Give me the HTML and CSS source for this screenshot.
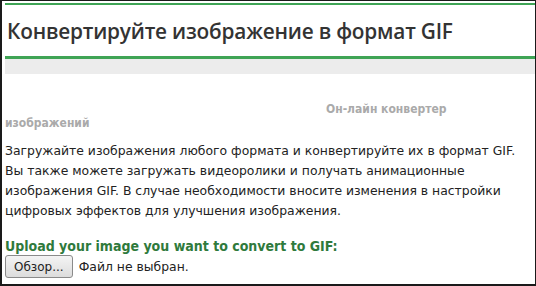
FILE: index.html
```html
<!DOCTYPE html>
<html lang="ru">
<head>
  <meta charset="UTF-8" />
  <title>Конвертируйте изображение в формат GIF</title>
  <link rel="stylesheet" href="styles.css">
</head>
<body>
  <div class="frame">
    <div class="header">
      <h1>Конвертируйте изображение в формат GIF</h1>
    </div>
    <div class="stripe"></div>

    <div class="content">
      <h2 class="subtitle">Он-лайн конвертер изображений</h2>

      <p class="intro">
        Загружайте изображения любого формата и конвертируйте их в формат GIF.
        Вы также можете загружать видеоролики и получать анимационные
        изображения GIF. В случае необходимости вносите изменения в настройки
        цифровых эффектов для улучшения изображения.
      </p>

      <h3 class="upload-title">Upload your image you want to convert to GIF:</h3>
      <div class="upload-row">
        <button class="browse">Обзор...</button>
        <span class="file-name">Файл не выбран.</span>
      </div>
    </div>
  </div>
</body>
</html>
```

FILE: styles.css
```css
html, body {
  margin: 0;
  padding: 0;
  background: white;
}

.frame {
  box-sizing: border-box;
  width: 536px;
  height: 286px;
  border: 1px solid #1a1a1a;
  border-left-width: 2px;
  border-bottom-width: 2px;
  padding: 2px 0 0 3px;
  overflow: hidden;
}

.header {
  border-top: 2px solid #3fa455;
  border-bottom: 3px solid #3fa455;
  height: 51px;
  display: flex;
  align-items: center;
  padding-left: 2px;
}

.header h1 {
  margin: 0;
  font-family: "Open Sans", sans-serif;
  font-weight: 600;
  font-size: 20.8px;
  color: #333;
  letter-spacing: -0.2px;
}

.stripe {
  height: 15px;
  background-color: #ececec;
}

.content {
  font-family: "DejaVu Sans", Tahoma, sans-serif;
  font-size: 12.4px;
  color: #222;
  padding-right: 4px;
}

.subtitle {
  margin: 28px 0 0 0;
  font-family: "DejaVu Sans Condensed", "DejaVu Sans", sans-serif;
  font-size: 12px;
  font-weight: bold;
  color: #aaa;
  text-indent: 321px;
  line-height: 14px;
}

.intro {
  margin: 11px 0 0 0;
  line-height: 20px;
}

.upload-title {
  margin: 16px 0 0 0;
  font-family: "DejaVu Sans Condensed", "DejaVu Sans", sans-serif;
  font-size: 14px;
  color: #2f7a3c;
  line-height: 18px;
}

.upload-row {
  display: flex;
  align-items: center;
  gap: 6px;
  margin-top: 0;
}

.browse {
  font-family: "DejaVu Sans", Tahoma, sans-serif;
  font-size: 12px;
  padding: 2px 8px;
  height: 23px;
  background: linear-gradient(#f4f4f4, #dcdcdc);
  border: 1px solid #8a8a8a;
  border-radius: 3px;
  color: #222;
}

.file-name {
  color: #222;
}
```
